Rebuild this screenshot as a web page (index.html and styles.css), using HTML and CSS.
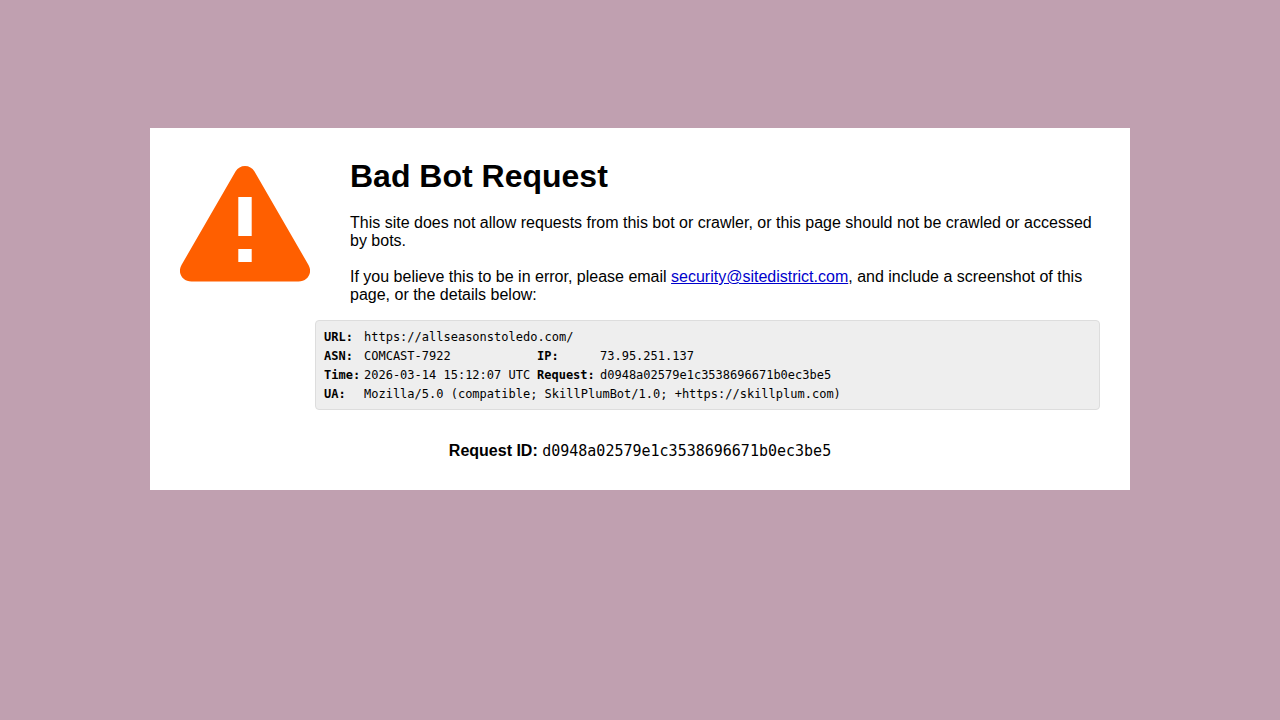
FILE: index.html
```html
<!DOCTYPE html>
<html lang="en">
<head>
    <meta charset="utf-8">
    <meta name="viewport" content="width=device-width, initial-scale=1">
    <title>Bad Bot Request</title>
    <link rel="stylesheet" href="styles.css">
</head>
<body>
    <main class="card">
        <div class="notice">
            <svg class="warning-icon" viewBox="0 0 130 116" aria-hidden="true">
                <path fill="#ff5f00" fill-rule="evenodd" d="M55.500 5.500 Q59 0 65 0 Q71 0 74.500 5.500 L128.500 99 C133 107 127.500 115.500 118.500 115.500 H11.500 C2.500 115.500 -3 107 1.500 99 Z M58.300 31 V70 H71.700 V31 Z M58.300 83 V96 H71.700 V83 Z"/>
            </svg>
            <div class="message">
                <h1>Bad Bot Request</h1>
                <p>This site does not allow requests from this bot or crawler, or this page should not be crawled or accessed by bots.</p>
                <p>If you believe this to be in error, please email <a href="mailto:security@sitedistrict.com">security@sitedistrict.com</a>, and include a screenshot of this page, or the details below:</p>
            </div>
        </div>

        <!-- Request details -->
        <div class="details">
            <table>
                <colgroup>
                    <col class="label-col">
                    <col class="value-col">
                    <col class="request-col">
                    <col>
                </colgroup>
                <tr>
                    <th scope="row">URL:</th>
                    <td colspan="3">https://allseasonstoledo.com/</td>
                </tr>
                <tr>
                    <th scope="row">ASN:</th>
                    <td>COMCAST-7922</td>
                    <th scope="row">IP:</th>
                    <td>73.95.251.137</td>
                </tr>
                <tr>
                    <th scope="row">Time:</th>
                    <td>2026-03-14 15:12:07 UTC</td>
                    <th scope="row">Request:</th>
                    <td>d0948a02579e1c3538696671b0ec3be5</td>
                </tr>
                <tr>
                    <th scope="row">UA:</th>
                    <td colspan="3">Mozilla/5.0 (compatible; SkillPlumBot/1.0; +https://skillplum.com)</td>
                </tr>
            </table>
        </div>

        <p class="request-id"><strong>Request ID:</strong> <code>d0948a02579e1c3538696671b0ec3be5</code></p>
    </main>
</body>
</html>
```
FILE: styles.css
```css
* {
    box-sizing: border-box;
}

body {
    margin: 0;
    padding: 128px 20px 40px;
    background-color: #c0a0b0;
    color: #000;
    font-family: Arial, "Liberation Sans", sans-serif;
    font-size: 16px;
    line-height: 18px;
}

.card {
    max-width: 980px;
    margin: 0 auto;
    padding: 30px;
    background-color: #fff;
}

.notice {
    display: flex;
    align-items: flex-start;
    gap: 40px;
    margin-bottom: 16px;
}

.warning-icon {
    flex: none;
    width: 130px;
    margin-top: 8px;
}

h1 {
    margin: 0 0 19px;
    font-size: 32px;
    line-height: 37px;
}

p {
    margin: 0 0 18px;
}

.message p:last-child {
    margin-bottom: 0;
}

a {
    color: #0000cc;
}

.details {
    margin: 0 0 32px 135px;
    padding: 7px 8px 5px;
    background-color: #eee;
    border: 1px solid #ddd;
    border-radius: 4px;
    overflow-x: auto;
}

.details table {
    table-layout: fixed;
    width: 100%;
    min-width: 520px;
    border-collapse: collapse;
    font-family: "DejaVu Sans Mono", monospace;
    font-size: 12px;
    line-height: 19px;
}

.label-col {
    width: 40px;
}

.value-col {
    width: 173px;
}

.request-col {
    width: 63px;
}

.details th,
.details td {
    padding: 0;
    text-align: left;
    white-space: nowrap;
}

.request-id {
    margin: 0;
    text-align: center;
}

.request-id code {
    font-family: "DejaVu Sans Mono", monospace;
    font-size: 15px;
}
```
